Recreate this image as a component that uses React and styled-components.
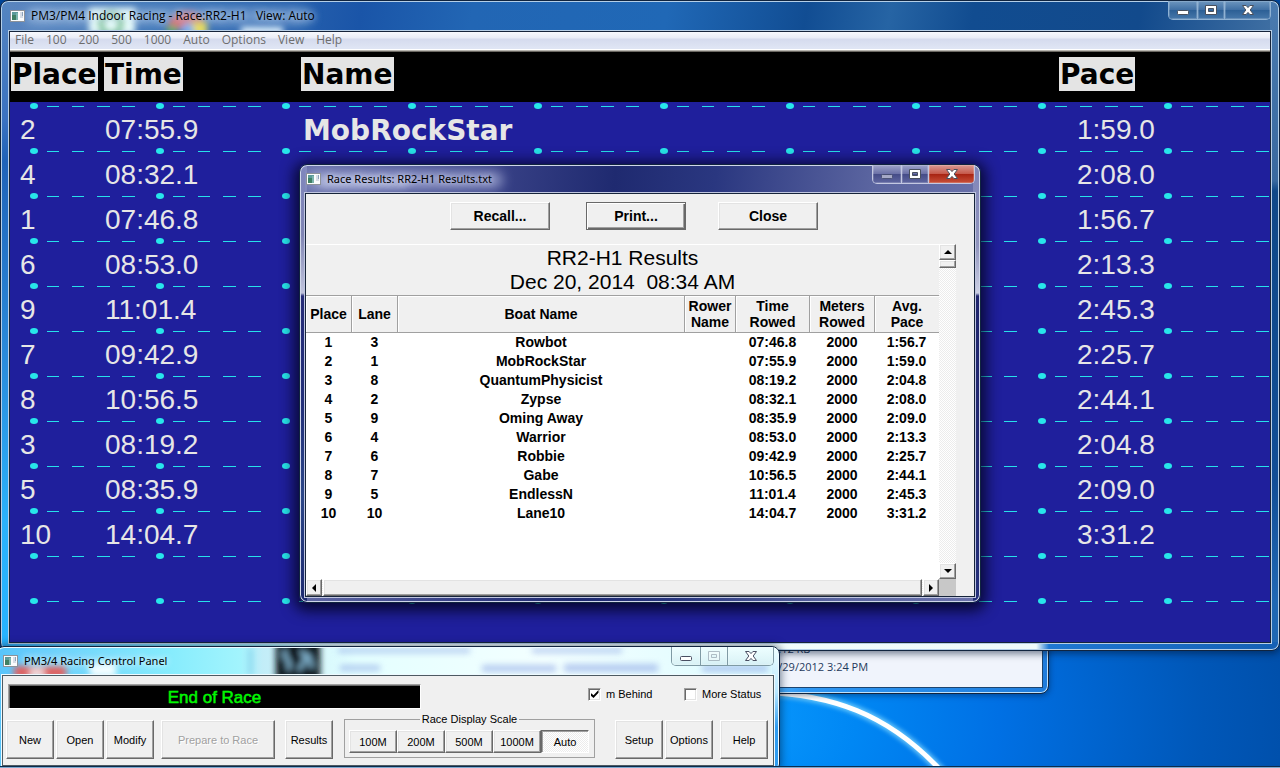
import React from 'react';
import styled, { createGlobalStyle, css } from 'styled-components';

const GlobalStyle = createGlobalStyle`
  * { box-sizing: border-box; }
  html, body { margin: 0; padding: 0; }
  body { font-family: "Liberation Sans", Arial, sans-serif; font-size: 11px; color: #000; }
  button, input { font: inherit; color: inherit; margin: 0; }
`;

const dither = css`
  background: conic-gradient(#ececec 25%, #fff 0 50%, #ececec 0 75%, #fff 0) 0 0 / 2px 2px;
`;

const raised = css`
  border: 1px solid;
  border-color: #fff #696969 #696969 #fff;
  box-shadow: inset -1px -1px 0 #a0a0a0, inset 1px 1px 0 #e3e3e3;
  background: #f0f0f0;
`;

const Desktop = styled.main`
  position: relative;
  height: 100vh;
  min-height: 640px;
  overflow: hidden;
  background: radial-gradient(ellipse 620px 420px at 720px 720px, #0a9cff 0%, #0087f4 22%, #0070e4 45%, #0057b8 78%, #004ba3 100%);
`;

const Wallpaper = styled.svg`
  position: absolute;
  left: 760px;
  bottom: 0;
`;

const Taskbar = styled.footer`
  position: absolute;
  left: 0;
  right: 0;
  bottom: 0;
  height: 2px;
  border-top: 1px solid #0c2c4c;
  background: #7ea9cf;
`;

/* ---------- window chrome ---------- */

const WindowFrame = styled.section`
  position: absolute;
  display: flex;
  flex-direction: column;
  border: 1px solid ${(p) => p.$edge || '#10243f'};
  border-radius: 8px;
  padding: 0 ${(p) => p.$side || 5}px ${(p) => p.$foot || 5}px;
`;

const MainFrame = styled(WindowFrame)`
  top: 0;
  left: 0;
  right: 0;
  background:
    linear-gradient(90deg, #2fb2fb 0, #5cc8fa 5%, #8ae6fc 14%, #a8f0fc 20%, #f2fdfd 27%, #f0fbfa 81%, #1f78d2 82%, #1560b4 100%) 0 100% / 100% 8px no-repeat,
    linear-gradient(180deg, #4a7bb0 0, #39699f 180px, #0f4888 190px, #114e96 480px, #2068b4 600px) 100% 0 / 9px 100% no-repeat,
    linear-gradient(180deg, #5585c0 0, #3a72c0 120px, #1f63b8 160px, #2a8ada 350px, #2bb2fb 520px, #27b4ff 640px) 0 0 / 9px 100% no-repeat,
    linear-gradient(100deg, #5c86bf 0, #3e74b6 11%, #1a55a8 26%, #2266b4 34%, #2068b6 48%, #114d93 58%, #2664a4 64%, #114c90 70%, #124a8c 82%, #4a78a8 94%, #41709f 100%);
  box-shadow: inset 0 0 0 1px #b4cfe8, 0 2px 7px 1px rgba(0, 20, 50, 0.5);
`;

const DialogFrame = styled(WindowFrame)`
  top: 164px;
  left: 299px;
  width: 682px;
  background:
    linear-gradient(180deg, #7f86bd 0, #8085b4 70px, #c0c3dc 128px, #262c78 131px, #23307a 240px, #2c4688 330px, #1d2a70 436px) 0 0 / 7px 100% no-repeat,
    linear-gradient(180deg, #8085b8 0, #9094be 80px, #ccd0e4 128px, #20266e 131px, #232a74 300px, #25307a 436px) 100% 0 / 7px 100% no-repeat,
    linear-gradient(95deg, #6a72ac 0, #3a4388 26%, #1f2a70 44%, #2a3780 58%, #5b65a0 80%, #6c73ac 100%);
  box-shadow: inset 0 0 0 1px #cfd6ea, 0 3px 14px 5px rgba(0, 0, 20, 0.75);
`;

const PanelFrame = styled(WindowFrame)`
  top: 646px;
  left: -4px;
  width: 784px;
  background:
    linear-gradient(180deg, #f0ffff 0, #b9e8ff 45px, #2f9cf0 80px, #2f9cf0 100%) 100% 0 / 7px 100% no-repeat,
    linear-gradient(90deg, #58c4fb 0, #6fd3fb 8%, #86ecfd 22%, #a2f4fd 31%, #c2edf8 34%, #e4ffff 46%, #f3ffff 70%, #dcfbff 100%);
  box-shadow: inset 0 0 0 1px #eefaff, 0 0 8px 1px rgba(0, 20, 50, 0.55);
`;

const ExplorerFrame = styled(WindowFrame)`
  top: 610px;
  left: 700px;
  width: 349px;
  padding-top: 20px;
  background: linear-gradient(90deg, #8fdcff, #2d97f4 30%, #1f7cdc);
  box-shadow: inset 0 0 0 1px #bfe0fa, 0 1px 6px rgba(0, 20, 50, 0.5);
`;

const ExplorerDetails = styled.div`
  display: flex;
  flex-direction: column;
  gap: 1px;
  height: 57px;
  padding: 8px 0 0 65px;
  border: 1px solid #1c4570;
  background: #f0f4fc;
  color: #1e395b;
  font: 11px/17px "Open Sans", sans-serif;
`;

const Client = styled.div`
  position: relative;
  border: 1px solid ${(p) => p.$edge || '#16243a'};
  box-shadow: 0 0 0 1px ${(p) => p.$rim || '#b8cfe6'};
  background: #f0f0f0;
`;

const TitleBar = styled.header`
  position: relative;
  display: flex;
  align-items: center;
  height: ${(p) => p.$height}px;
  padding-left: 1px;
`;

const TitleText = styled.h1`
  position: relative;
  margin: 0 0 0 6px;
  flex: 1;
  font: 400 11px/16px "Noto Sans", "Open Sans", sans-serif;
  white-space: pre;
  text-shadow: ${(p) => p.$glow};
`;

const MainTitleText = styled(TitleText)`
  font: 400 12px/16px "Open Sans", sans-serif;
`;

const Reflections = styled.svg`
  position: absolute;
  left: 0;
  top: 1px;
  width: 100%;
  height: calc(100% - 2px);
`;

const AppIconSvg = styled.svg`
  position: relative;
  flex: none;
`;

const CaptionGroup = styled.div`
  position: relative;
  align-self: flex-start;
  display: flex;
  height: 19px;
  border: 1px solid ${(p) => p.$line};
  border-top: 0;
  border-radius: 0 0 5px 5px;
  overflow: hidden;
`;

const CaptionButton = styled.button`
  display: flex;
  align-items: center;
  justify-content: center;
  width: ${(p) => p.$w}px;
  padding: 0;
  border: 0;
  border-left: ${(p) => (p.$first ? '0' : `1px solid ${p.$line}`)};
  background: ${(p) => p.$bg};
  box-shadow: inset 0 0 0 1px rgba(255, 255, 255, 0.18);
`;

function AppIcon({ label }) {
  return (
    <AppIconSvg width="15" height="12" viewBox="0 0 15 12" role="img" aria-label={label} shapeRendering="crispEdges">
      <rect width="15" height="12" fill="#8d9299" />
      <rect x="1" y="1" width="13" height="10" fill="#fbfcfd" />
      <rect x="2" y="2" width="6" height="8" fill="#5b9a9a" />
      <rect x="2" y="5" width="4" height="5" fill="#3f8064" />
      <rect x="6" y="3" width="2" height="7" fill="#7cb4ae" />
      <rect x="10" y="2" width="3" height="6" fill="#d7dde6" />
      <rect x="12" y="2" width="1" height="4" fill="#8fa3ba" />
    </AppIconSvg>
  );
}

function CaptionButtons({ line, bg, closeBg, fill, stroke, dimMin, dimMax }) {
  return (
    <CaptionGroup $line={line}>
      <CaptionButton aria-label="Minimize" $first $w={28} $line={line} $bg={bg}>
        <svg width="14" height="14" viewBox="0 0 14 14" opacity={dimMin ? 0.5 : 1}>
          <rect x="1.5" y="7.5" width="11" height="4" rx="1" fill={fill} stroke={stroke} />
        </svg>
      </CaptionButton>
      <CaptionButton aria-label="Maximize" $w={27} $line={line} $bg={bg}>
        <svg width="14" height="14" viewBox="0 0 14 14" opacity={dimMax ? 0.35 : 1}>
          <path fillRule="evenodd" d="M1.5 2.500h11v9h-11z M4.500 5.500v3h5v-3z" fill={fill} stroke={stroke} />
        </svg>
      </CaptionButton>
      <CaptionButton aria-label="Close" $w={46} $line={line} $bg={closeBg || bg}>
        <svg width="14" height="14" viewBox="0 0 14 14">
          <path
            d="M1.500 2.500h3.600L7 4.600l1.900-2.100h3.600L9.200 7l3.300 4.500H8.900L7 9.400l-1.900 2.100H1.500L4.800 7z"
            fill={fill}
            stroke={stroke}
          />
        </svg>
      </CaptionButton>
    </CaptionGroup>
  );
}

/* ---------- race board ---------- */

const MenuBar = styled.nav`
  display: flex;
  align-items: flex-start;
  gap: 12px;
  height: 20px;
  padding-left: 5px;
  border-bottom: 1px solid #6b6862;
  box-shadow: inset 0 -1px 0 #b9b6b0, inset 0 -2px 0 #fff;
  background: linear-gradient(#f8f9fd 0, #e9ecf6 6px, #d5dbee 7px, #dfe5f4 16px);
`;

const MenuItem = styled.button`
  padding: 0;
  border: 0;
  background: none;
  color: #6d6d6d;
  font: 12px/16px "Open Sans", sans-serif;
`;

const Board = styled.div`
  position: relative;
  min-height: 590px;
  background: #1f1f9c;
`;

const LaneLines = styled.svg`
  position: absolute;
  left: 0;
  top: 50px;
  width: 100%;
  height: calc(100% - 50px);
`;

const BoardTable = styled.table`
  position: relative;
  width: 100%;
  table-layout: fixed;
  border-collapse: collapse;
  color: #e6e6e6;
  font: 28px/35px "Liberation Sans", Arial, sans-serif;
`;

const BoardHead = styled.th`
  width: ${(p) => (p.$w ? `${p.$w}px` : 'auto')};
  height: 50px;
  padding: 5px 0 0 ${(p) => p.$indent || 0}px;
  background: #000;
  text-align: left;
  vertical-align: top;
  font: 700 28px/32px "DejaVu Sans", Verdana, sans-serif;
`;

const HeadLabel = styled.span`
  display: inline-block;
  padding: 2px 1px 0;
  background: #e4e4e4;
  color: #000;
`;

const BoardCell = styled.td`
  height: 45px;
  padding: 10px 0 0 ${(p) => p.$indent || 0}px;
  white-space: nowrap;
`;

const BoardName = styled.td`
  height: 45px;
  padding: 12px 0 0 2px;
  font: 700 28px/33px "DejaVu Sans", Verdana, sans-serif;
`;

/* ---------- results dialog ---------- */

const DialogToolbar = styled.div`
  display: grid;
  grid-template-columns: 136px 132px 100px;
  height: 50px;
  padding: 8px 0 0 144px;
`;

const DialogButton = styled.button`
  ${raised}
  width: 100px;
  height: 28px;
  padding: 0;
  font: 700 14px/16px "Liberation Sans", Arial, sans-serif;
  ${(p) =>
    p.$default &&
    css`
      border-color: #696969;
      box-shadow: inset 1px 1px 0 #fff, inset -1px -1px 0 #696969, inset -2px -2px 0 #a0a0a0;
    `}
`;

const ReportGrid = styled.div`
  display: grid;
  grid-template-columns: 1fr 17px;
  grid-template-rows: 335px 17px;
  margin-right: 18px;
`;

const Report = styled.div`
  border-top: 1px solid #fff;
  background: #fff;
  overflow: hidden;
`;

const ReportTitle = styled.h2`
  height: 50px;
  margin: 0;
  padding-top: 1px;
  background: #f0f0f0;
  text-align: center;
  white-space: pre;
  font: 400 21px/24px "Liberation Sans", Arial, sans-serif;
`;

const ResultsTable = styled.table`
  width: 100%;
  table-layout: fixed;
  border-collapse: separate;
  border-spacing: 0;
  font: 700 14px/19px "Liberation Sans", Arial, sans-serif;
  text-align: center;
`;

const ResultsHead = styled.th`
  width: ${(p) => (p.$w ? `${p.$w}px` : 'auto')};
  height: 38px;
  padding: 0;
  border: solid #a0a0a0;
  border-width: 1px ${(p) => (p.$last ? 0 : 1)}px 1px 0;
  box-shadow: inset 1px 1px 0 #fff;
  background: #f0f0f0;
  line-height: 16px;
`;

const ResultsCell = styled.td`
  height: 19px;
  padding: 0 1px 0 0;
`;

const VTrack = styled.div`
  ${dither}
  display: flex;
  flex-direction: column;
`;

const HTrack = styled.div`
  ${dither}
  display: flex;
  gap: 1px;
`;

const ScrollButton = styled.button`
  ${raised}
  display: flex;
  flex: none;
  align-items: center;
  justify-content: center;
  width: ${(p) => (p.$vertical ? 17 : 16)}px;
  height: ${(p) => (p.$vertical ? 16 : 17)}px;
  padding: 0;
`;

const VThumb = styled.div`
  ${raised}
  height: 8px;
  margin-bottom: auto;
`;

const HThumb = styled.div`
  ${raised}
  flex: 1;
`;

const Corner = styled.div`
  background: #c8c8c8;
`;

function Arrow({ d }) {
  return (
    <svg width="8" height="8" viewBox="0 0 8 8">
      <path d={d} fill="#000" />
    </svg>
  );
}

/* ---------- control panel ---------- */

const PanelBody = styled(Client)`
  display: flex;
  flex-direction: column;
  gap: 3px;
  padding: 8px 5px 6px 3px;
`;

const StatusRow = styled.div`
  display: grid;
  grid-template-columns: 580px 96px 1fr;
  align-items: start;
  padding-left: 2px;
`;

const StatusDisplay = styled.output`
  width: 413px;
  height: 25px;
  border: 1px solid;
  border-color: #a0a0a0 #fff #fff #a0a0a0;
  box-shadow: inset 1px 1px 0 #696969;
  background: #000;
  color: #00f800;
  text-align: center;
  font: 17px/25px "Liberation Sans", Arial, sans-serif;
  -webkit-text-stroke: 0.5px #00f800;
`;

const CheckLabel = styled.label`
  display: flex;
  align-items: center;
  gap: 5px;
  height: 20px;
  white-space: nowrap;
`;

const CheckInput = styled.input`
  appearance: none;
  display: grid;
  place-items: center;
  width: 13px;
  height: 13px;
  border: 1px solid;
  border-color: #a0a0a0 #fff #fff #a0a0a0;
  box-shadow: inset 1px 1px 0 #696969, inset -1px -1px 0 #e3e3e3;
  background: #fff;
  &:checked::after {
    content: '';
    width: 8px;
    height: 8px;
    background: #000;
    clip-path: polygon(0 35%, 38% 65%, 100% 0, 100% 35%, 38% 100%, 0 70%);
  }
`;

const ControlRow = styled.div`
  display: grid;
  grid-template-columns: 155px 124px 59px 271px 105px 48px;
  align-items: end;
`;

const ButtonGroup = styled.div`
  display: flex;
  gap: 2px;
`;

const PanelButton = styled.button`
  ${raised}
  width: ${(p) => p.$w || 48}px;
  height: 39px;
  padding: 0;
  white-space: nowrap;
  &:disabled { color: #a0a0a0; text-shadow: 1px 1px 0 #fff; }
`;

const ScaleGroup = styled.fieldset`
  display: flex;
  width: 251px;
  min-width: 0;
  height: 46px;
  margin: 0 0 1px;
  padding: 4px 4px 0;
  border: 1px solid #a0a0a0;
`;

const ScaleLegend = styled.legend`
  margin: 0 auto;
  padding: 0 2px;
  line-height: 14px;
`;

const ScaleButton = styled.button`
  ${raised}
  width: 48px;
  height: 23px;
  padding: 0;
  &[aria-pressed='true'] {
    ${dither}
    border-color: #696969 #fff #fff #696969;
    box-shadow: inset 1px 1px 0 #a0a0a0;
  }
`;

/* ---------- data ---------- */

const MENU = ['File', '100', '200', '500', '1000', 'Auto', 'Options', 'View', 'Help'];

const BOARD = [
  ['2', '07:55.9', 'MobRockStar', '1:59.0'],
  ['4', '08:32.1', '', '2:08.0'],
  ['1', '07:46.8', '', '1:56.7'],
  ['6', '08:53.0', '', '2:13.3'],
  ['9', '11:01.4', '', '2:45.3'],
  ['7', '09:42.9', '', '2:25.7'],
  ['8', '10:56.5', '', '2:44.1'],
  ['3', '08:19.2', '', '2:04.8'],
  ['5', '08:35.9', '', '2:09.0'],
  ['10', '14:04.7', '', '3:31.2'],
];

const RESULTS = [
  ['1', '3', 'Rowbot', '', '07:46.8', '2000', '1:56.7'],
  ['2', '1', 'MobRockStar', '', '07:55.9', '2000', '1:59.0'],
  ['3', '8', 'QuantumPhysicist', '', '08:19.2', '2000', '2:04.8'],
  ['4', '2', 'Zypse', '', '08:32.1', '2000', '2:08.0'],
  ['5', '9', 'Oming Away', '', '08:35.9', '2000', '2:09.0'],
  ['6', '4', 'Warrior', '', '08:53.0', '2000', '2:13.3'],
  ['7', '6', 'Robbie', '', '09:42.9', '2000', '2:25.7'],
  ['8', '7', 'Gabe', '', '10:56.5', '2000', '2:44.1'],
  ['9', '5', 'EndlessN', '', '11:01.4', '2000', '2:45.3'],
  ['10', '10', 'Lane10', '', '14:04.7', '2000', '3:31.2'],
];

const SCALES = ['100M', '200M', '500M', '1000M', 'Auto'];

function RaceWindow() {
  return (
    <MainFrame $side={8} $foot={7}>
      <TitleBar $height={30}>
        <Reflections>
          <defs>
            <filter id="soft" x="-50%" y="-50%" width="200%" height="200%">
              <feGaussianBlur stdDeviation="3" />
            </filter>
            <filter id="glow" x="-20%" y="-80%" width="140%" height="260%">
              <feGaussianBlur stdDeviation="6" />
            </filter>
          </defs>
          <rect x="16" y="6" width="286" height="17" rx="8" fill="#9dbbe0" opacity="0.6" filter="url(#glow)" />
          <g filter="url(#soft)">
            <rect x="80" y="6" width="46" height="26" fill="#e8fbfb" />
            <circle cx="102" cy="22" r="10" fill="none" stroke="#7cc29a" strokeWidth="6" />
            <rect x="232" y="25" width="42" height="8" fill="#e6f6ff" />
            <path d="M158 28a20 18 0 0 1 38-8l-18 6z" fill="#d8767e" />
            <path d="M182 20h16v14h-14z" fill="#e6dc62" />
            <path d="M158 24h10v8h-10z" fill="#58ae6c" />
            <circle cx="179" cy="27" r="6" fill="#7fb2f2" />
          </g>
        </Reflections>
        <AppIcon label="Race application" />
        <MainTitleText $glow="0 0 6px rgba(190,215,245,.9), 0 0 10px rgba(190,215,245,.6)">
          {'PM3/PM4 Indoor Racing - Race:RR2-H1   View: Auto'}
        </MainTitleText>
        <CaptionButtons line="#8fb2d4" bg="linear-gradient(#6d96bf, #3f6fa4 50%, #2d6096 52%, #4677aa)" fill="#fff" stroke="#49505e" />
      </TitleBar>
      <Client>
        <MenuBar>
          {MENU.map((m) => (
            <MenuItem key={m}>{m}</MenuItem>
          ))}
        </MenuBar>
        <Board>
          <LaneLines aria-hidden="true">
            <defs>
              <pattern id="lane" width="126" height="45" patternUnits="userSpaceOnUse">
                <ellipse cx="24" cy="4" rx="4" ry="3" fill="#27e6ea" />
                <g fill="#27e0ea" shapeRendering="crispEdges">
                  <rect x="37" y="4" width="12" height="1" />
                  <rect x="62" y="4" width="12" height="1" />
                  <rect x="87" y="4" width="13" height="1" />
                  <rect x="112" y="4" width="13" height="1" />
                </g>
              </pattern>
            </defs>
            <rect width="100%" height="100%" fill="url(#lane)" />
          </LaneLines>
          <BoardTable>
            <thead>
              <tr>
                <BoardHead $w={94} $indent={1}><HeadLabel>Place</HeadLabel></BoardHead>
                <BoardHead $w={197}><HeadLabel>Time</HeadLabel></BoardHead>
                <BoardHead><HeadLabel>Name</HeadLabel></BoardHead>
                <BoardHead $w={211}><HeadLabel>Pace</HeadLabel></BoardHead>
              </tr>
            </thead>
            <tbody>
              {BOARD.map(([place, time, name, pace]) => (
                <tr key={place}>
                  <BoardCell $indent={10}>{place}</BoardCell>
                  <BoardCell $indent={1}>{time}</BoardCell>
                  <BoardName>{name}</BoardName>
                  <BoardCell $indent={18}>{pace}</BoardCell>
                </tr>
              ))}
            </tbody>
          </BoardTable>
        </Board>
      </Client>
    </MainFrame>
  );
}

function ResultsDialog() {
  return (
    <DialogFrame role="dialog" aria-label="Race Results">
      <TitleBar $height={28}>
        <Reflections>
          <rect x="2" y="5" width="196" height="18" rx="9" fill="#a9b0d8" opacity="0.75" filter="url(#glow)" />
          <rect x="14" y="10" width="90" height="12" rx="6" fill="#c5cce8" opacity="0.5" filter="url(#soft)" />
        </Reflections>
        <AppIcon label="Results application" />
        <TitleText $glow="0 0 5px rgba(215,220,245,.9), 0 0 9px rgba(200,205,240,.8)">Race Results: RR2-H1 Results.txt</TitleText>
        <CaptionButtons
          line="#c3c8e2"
          bg="linear-gradient(#9fa4cb, #6a70a6 50%, #454c88 52%, #5f66a0)"
          closeBg="linear-gradient(#d99a94, #c65a4c 48%, #a82413 52%, #c8503a)"
          fill="#fff"
          stroke="#49505e"
          dimMin
        />
      </TitleBar>
      <Client $rim="#c0c6e0">
        <DialogToolbar>
          <DialogButton>Recall...</DialogButton>
          <DialogButton $default>Print...</DialogButton>
          <DialogButton>Close</DialogButton>
        </DialogToolbar>
        <ReportGrid>
          <Report>
            <ReportTitle>{'RR2-H1 Results\nDec 20, 2014  08:34 AM'}</ReportTitle>
            <ResultsTable>
              <thead>
                <tr>
                  <ResultsHead $w={46}>Place</ResultsHead>
                  <ResultsHead $w={46}>Lane</ResultsHead>
                  <ResultsHead>Boat Name</ResultsHead>
                  <ResultsHead $w={51}>Rower Name</ResultsHead>
                  <ResultsHead $w={74}>Time<br />Rowed</ResultsHead>
                  <ResultsHead $w={65}>Meters Rowed</ResultsHead>
                  <ResultsHead $w={64} $last>Avg.<br />Pace</ResultsHead>
                </tr>
              </thead>
              <tbody>
                {RESULTS.map((row) => (
                  <tr key={row[0]}>
                    {row.map((value, i) => (
                      <ResultsCell key={i}>{value}</ResultsCell>
                    ))}
                  </tr>
                ))}
              </tbody>
            </ResultsTable>
          </Report>
          <VTrack>
            <ScrollButton $vertical aria-label="Scroll up"><Arrow d="M0 6h8L4 2z" /></ScrollButton>
            <VThumb />
            <ScrollButton $vertical aria-label="Scroll down"><Arrow d="M0 2h8L4 6z" /></ScrollButton>
          </VTrack>
          <HTrack>
            <ScrollButton aria-label="Scroll left"><Arrow d="M6 0v8L2 4z" /></ScrollButton>
            <HThumb />
            <ScrollButton aria-label="Scroll right"><Arrow d="M2 0v8l4-4z" /></ScrollButton>
          </HTrack>
          <Corner />
        </ReportGrid>
      </Client>
    </DialogFrame>
  );
}

function ControlPanel() {
  return (
    <PanelFrame>
      <TitleBar $height={28}>
        <Reflections>
          <g filter="url(#soft)">
            <rect x="12" y="18" width="52" height="12" fill="#e2605e" />
            <rect x="28" y="20" width="14" height="10" fill="#f6d6d6" />
            <rect x="88" y="15" width="26" height="14" fill="#f2fdff" />
            <rect x="247" y="0" width="3" height="28" fill="#76cbe8" />
            <rect x="274" y="-8" width="44" height="40" fill="#0c161e" />
            <path d="M284 2c-6 8 8 10 2 20M298 4c10 2 4 12-2 18M306 6l4 14" stroke="#84b8d4" strokeWidth="4" fill="none" />
          </g>
          <g filter="url(#soft)" fill="#8ea8e6" opacity="0.6">
            <rect x="336" y="0" width="132" height="5" />
            <rect x="530" y="0" width="90" height="5" />
            <rect x="338" y="17" width="40" height="6" />
            <rect x="480" y="17" width="74" height="7" />
            <rect x="562" y="16" width="94" height="8" />
            <rect x="700" y="17" width="66" height="7" />
          </g>
        </Reflections>
        <AppIcon label="Control panel application" />
        <TitleText $glow="0 0 6px #fff, 0 0 8px rgba(255,255,255,.7)">PM3/4 Racing Control Panel</TitleText>
        <CaptionButtons line="#7f9aa4" bg="linear-gradient(rgba(240,255,255,.9), rgba(215,240,244,.85))" fill="#fff" stroke="#4a4f62" dimMax />
      </TitleBar>
      <PanelBody $edge="#4d5a62" $rim="#eefaff">
        <StatusRow>
          <StatusDisplay>End of Race</StatusDisplay>
          <CheckLabel>
            <CheckInput type="checkbox" defaultChecked />
            m Behind
          </CheckLabel>
          <CheckLabel>
            <CheckInput type="checkbox" />
            More Status
          </CheckLabel>
        </StatusRow>
        <ControlRow>
          <ButtonGroup>
            <PanelButton>New</PanelButton>
            <PanelButton>Open</PanelButton>
            <PanelButton>Modify</PanelButton>
          </ButtonGroup>
          <PanelButton $w={114} disabled>Prepare to Race</PanelButton>
          <PanelButton>Results</PanelButton>
          <ScaleGroup>
            <ScaleLegend>Race Display Scale</ScaleLegend>
            {SCALES.map((s) => (
              <ScaleButton key={s} aria-pressed={s === 'Auto'}>{s}</ScaleButton>
            ))}
          </ScaleGroup>
          <ButtonGroup>
            <PanelButton>Setup</PanelButton>
            <PanelButton>Options</PanelButton>
          </ButtonGroup>
          <PanelButton>Help</PanelButton>
        </ControlRow>
      </PanelBody>
    </PanelFrame>
  );
}

export default function App() {
  return (
    <>
      <GlobalStyle />
      <Desktop>
        <Wallpaper width="200" height="84" viewBox="0 0 200 84" aria-hidden="true">
          <defs>
            <filter id="halo" x="-20%" y="-20%" width="140%" height="140%">
              <feGaussianBlur stdDeviation="2" />
            </filter>
          </defs>
          <path d="M-10 8C70 8 130 30 184 90" fill="none" stroke="#8fe0ff" strokeWidth="9" filter="url(#halo)" opacity="0.7" />
          <path d="M-10 8C70 8 130 30 184 90" fill="none" stroke="#fff" strokeWidth="5" />
        </Wallpaper>
        <ExplorerFrame>
          <ExplorerDetails>
            <span>6.12 KB</span>
            <span>6/29/2012 3:24 PM</span>
          </ExplorerDetails>
        </ExplorerFrame>
        <RaceWindow />
        <ResultsDialog />
        <ControlPanel />
        <Taskbar />
      </Desktop>
    </>
  );
}
